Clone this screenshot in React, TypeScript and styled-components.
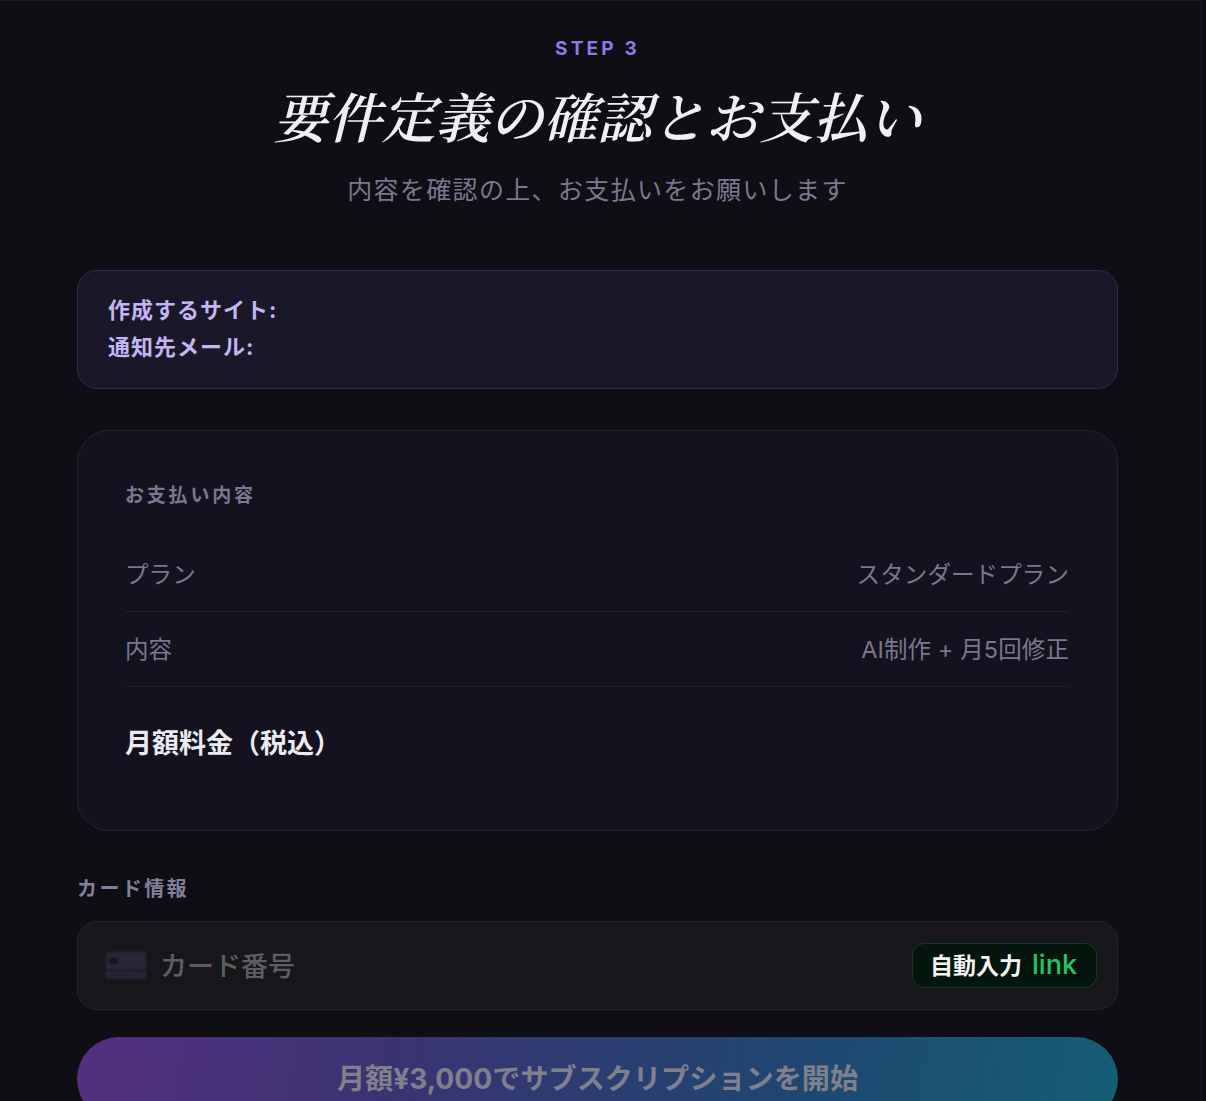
import styled, { createGlobalStyle } from "styled-components";

const sans = `Inter, "Noto Sans CJK JP", sans-serif`;

const GlobalStyle = createGlobalStyle`
  html, body {
    margin: 0;
    height: 100%;
    background: #0e0e14;
    overflow: hidden;
  }
  * {
    box-sizing: border-box;
  }
`;

const CardIcon = () => (
  <svg width="42" height="29" viewBox="0 0 42 29" aria-hidden="true">
    <defs>
      <filter id="soft">
        <feGaussianBlur stdDeviation="0.8" />
      </filter>
    </defs>
    <g filter="url(#soft)">
      <rect x="1" y="1" width="40" height="27" rx="2" fill="#252838" />
      <rect x="1" y="18" width="40" height="3" fill="#1a1c26" />
      <rect x="4" y="7" width="9" height="6" fill="#17181f" />
      <rect x="4" y="23" width="22" height="2" fill="#20222c" />
    </g>
  </svg>
);

const App = () => {
  return (
    <Styled.Page>
      <GlobalStyle />
      <Styled.Header>
        <Styled.Step>STEP 3</Styled.Step>
        <Styled.Title>要件定義の確認とお支払い</Styled.Title>
        <Styled.Lead>内容を確認の上、お支払いをお願いします</Styled.Lead>
      </Styled.Header>

      <Styled.Summary>
        <Styled.SummaryLine>作成するサイト:</Styled.SummaryLine>
        <Styled.SummaryLine>通知先メール:</Styled.SummaryLine>
      </Styled.Summary>

      <Styled.PaymentCard>
        <Styled.SectionLabel>お支払い内容</Styled.SectionLabel>
        <Styled.Row>
          <span>プラン</span>
          <span>スタンダードプラン</span>
        </Styled.Row>
        <Styled.Row>
          <span>内容</span>
          <span>AI制作 + 月5回修正</span>
        </Styled.Row>
        <Styled.Total>月額料金（税込）</Styled.Total>
      </Styled.PaymentCard>

      <Styled.FieldLabel>カード情報</Styled.FieldLabel>
      <Styled.CardField>
        <CardIcon />
        <Styled.Placeholder>カード番号</Styled.Placeholder>
        <Styled.Autofill>
          自動入力
          <Styled.LinkWord>link</Styled.LinkWord>
        </Styled.Autofill>
      </Styled.CardField>

      <Styled.SubmitButton type="button">
        月額¥3,000でサブスクリプションを開始
      </Styled.SubmitButton>
    </Styled.Page>
  );
};

const Styled = {
  Page: styled.main`
    width: 1202px;
    height: 1101px;
    overflow: hidden;
    padding: 0 83px 0 77px;
    border-top: 1px solid #191920;
    border-right: 1px solid #1b1b22;
    font-family: ${sans};
  `,

  Header: styled.header`
    display: flex;
    flex-direction: column;
    align-items: center;
    padding-top: 37px;
  `,

  Step: styled.div`
    font-size: 19px;
    line-height: 22px;
    font-weight: 700;
    letter-spacing: 3.2px;
    color: #8f79e6;
  `,

  Title: styled.h1`
    margin: 24px 0 0;
    font-family: "Noto Serif CJK JP", "Liberation Serif", "Noto Sans CJK JP", serif;
    font-size: 54px;
    line-height: 62px;
    font-weight: 600;
    font-style: italic;
    color: #f0eff3;
  `,

  Lead: styled.p`
    margin: 29px 0 0;
    font-size: 25px;
    line-height: 30px;
    letter-spacing: 1.35px;
    color: #7a788f;
  `,

  Summary: styled.section`
    height: 119px;
    margin-top: 65px;
    padding: 21px 30px;
    background: #1a1728;
    border: 1px solid #2f2b50;
    border-radius: 20px;
  `,

  SummaryLine: styled.div`
    font-size: 22px;
    line-height: 37px;
    font-weight: 700;
    letter-spacing: 1px;
    color: #c2b5f2;
  `,

  PaymentCard: styled.section`
    height: 401px;
    margin-top: 41px;
    padding: 50px 48px 0 47px;
    background: #13121e;
    border: 1px solid #24233a;
    border-radius: 32px;
  `,

  SectionLabel: styled.div`
    margin-bottom: 26px;
    font-size: 19px;
    line-height: 30px;
    font-weight: 700;
    letter-spacing: 2.8px;
    color: #7a7891;
  `,

  Row: styled.div`
    display: flex;
    justify-content: space-between;
    align-items: center;
    height: 75px;
    padding-bottom: 2px;
    border-bottom: 1px solid #20202f;
    font-size: 23.5px;
    letter-spacing: 0.1px;
    color: #7a788f;
  `,

  Total: styled.div`
    margin-top: 35px;
    font-size: 27px;
    line-height: 44px;
    font-weight: 700;
    color: #ebeaf0;
  `,

  FieldLabel: styled.div`
    margin-top: 43px;
    font-size: 20px;
    line-height: 30px;
    font-weight: 700;
    letter-spacing: 2.4px;
    color: #82809a;
  `,

  CardField: styled.div`
    display: flex;
    align-items: center;
    height: 89px;
    margin-top: 17px;
    padding: 0 20px 0 27px;
    background: #17171b;
    border: 1px solid #25252b;
    border-radius: 20px;
  `,

  Placeholder: styled.span`
    flex: 1;
    margin-left: 13px;
    padding-bottom: 2px;
    font-size: 27px;
    font-weight: 500;
    color: #5e5e62;
  `,

  Autofill: styled.div`
    display: flex;
    align-items: center;
    gap: 10px;
    height: 45px;
    padding: 0 19px 3px 17px;
    background: #04150d;
    border: 1px solid #123d24;
    border-radius: 12px;
    font-size: 23px;
    font-weight: 700;
    color: #f2f3f2;
  `,

  LinkWord: styled.span`
    font-size: 27px;
    font-weight: 500;
    color: #22c566;
  `,

  SubmitButton: styled.button`
    display: block;
    width: 100%;
    height: 84px;
    margin-top: 27px;
    padding: 0 0 6px;
    background: linear-gradient(100deg, #54307f 0%, #3a3372 30%, #1f4670 68%, #155e74 100%);
    border: none;
    border-radius: 42px;
    font-family: ${sans};
    font-size: 28.15px;
    font-weight: 700;
    color: #7f808c;
  `,
};

export default App;
